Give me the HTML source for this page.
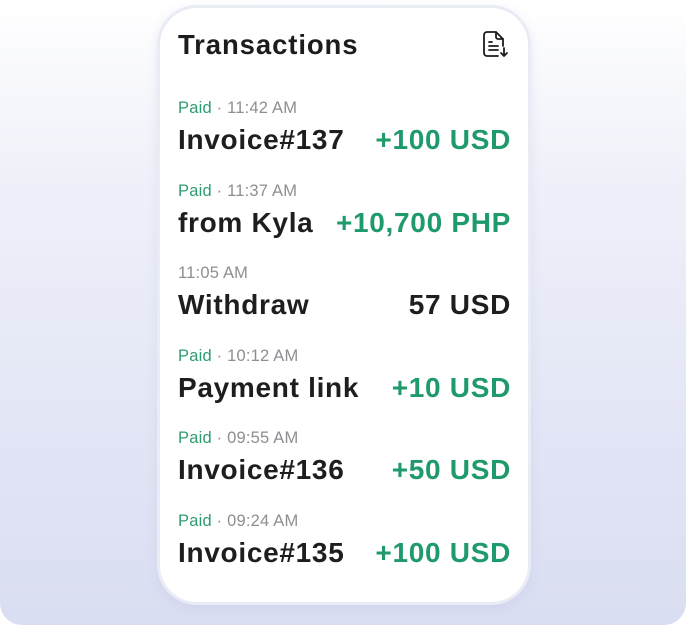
<!DOCTYPE html>
<html><head><meta charset="utf-8"><style>
html,body{margin:0;padding:0}
body{width:686px;height:625px;overflow:hidden;font-family:"Liberation Sans",sans-serif;position:relative;background:#fff}
.bg{position:absolute;left:0;top:0;width:686px;height:625px;border-radius:0 0 22px 22px;background:linear-gradient(180deg,#ffffff 0%,#eef0f9 30%,#e2e5f5 70%,#dadef2 100%)}
.card{position:absolute;left:157px;top:5px;width:368px;height:594px;background:#fff;border:3px solid #e9ebf5;border-radius:40px;box-shadow:0 4px 10px rgba(180,185,215,.25)}
.title{position:absolute;left:178px;top:29px;font-size:27.5px;font-weight:bold;color:#1c1c1e;letter-spacing:0.9px}
.icon{position:absolute;left:481px;top:30px}
.row{position:absolute;left:178px;width:333px}
.s{font-size:16.5px;color:#8e8e93;height:20px;line-height:20px;letter-spacing:0.2px}
.s b{font-weight:normal;color:#2e9c6f}
.m{display:flex;justify-content:space-between;font-size:28px;font-weight:bold;color:#1e1e20;line-height:34px;margin-top:5px;letter-spacing:0.7px}
.g{color:#1f9a6a}
</style></head><body>
<div class="bg"></div>
<div class="card"></div>
<div class="title">Transactions</div>
<svg class="icon" width="28" height="30" viewBox="0 0 28 30" fill="none" stroke="#1c1c1e" stroke-width="1.8" stroke-linecap="round" stroke-linejoin="round">
<path d="M17 26H6a3 3 0 0 1-3-3V5a3 3 0 0 1 3-3h9l7 7v7"/>
<path d="M15 2v5a2 2 0 0 0 2 2h5"/>
<path d="M8 12h3M8 16h9M8 20h9"/>
<path d="M23 18v8M20 23l3 3 3-3"/>
</svg>
<div class="row" style="top:98px"><div class="s"><b>Paid</b> · 11:42 AM</div><div class="m"><span>Invoice#137</span><span class="g">+100 USD</span></div></div>
<div class="row" style="top:181px"><div class="s"><b>Paid</b> · 11:37 AM</div><div class="m"><span>from Kyla</span><span class="g">+10,700 PHP</span></div></div>
<div class="row" style="top:263px"><div class="s">11:05 AM</div><div class="m"><span>Withdraw</span><span>57 USD</span></div></div>
<div class="row" style="top:346px"><div class="s"><b>Paid</b> · 10:12 AM</div><div class="m"><span>Payment link</span><span class="g">+10 USD</span></div></div>
<div class="row" style="top:428px"><div class="s"><b>Paid</b> · 09:55 AM</div><div class="m"><span>Invoice#136</span><span class="g">+50 USD</span></div></div>
<div class="row" style="top:511px"><div class="s"><b>Paid</b> · 09:24 AM</div><div class="m"><span>Invoice#135</span><span class="g">+100 USD</span></div></div>
</body></html>
